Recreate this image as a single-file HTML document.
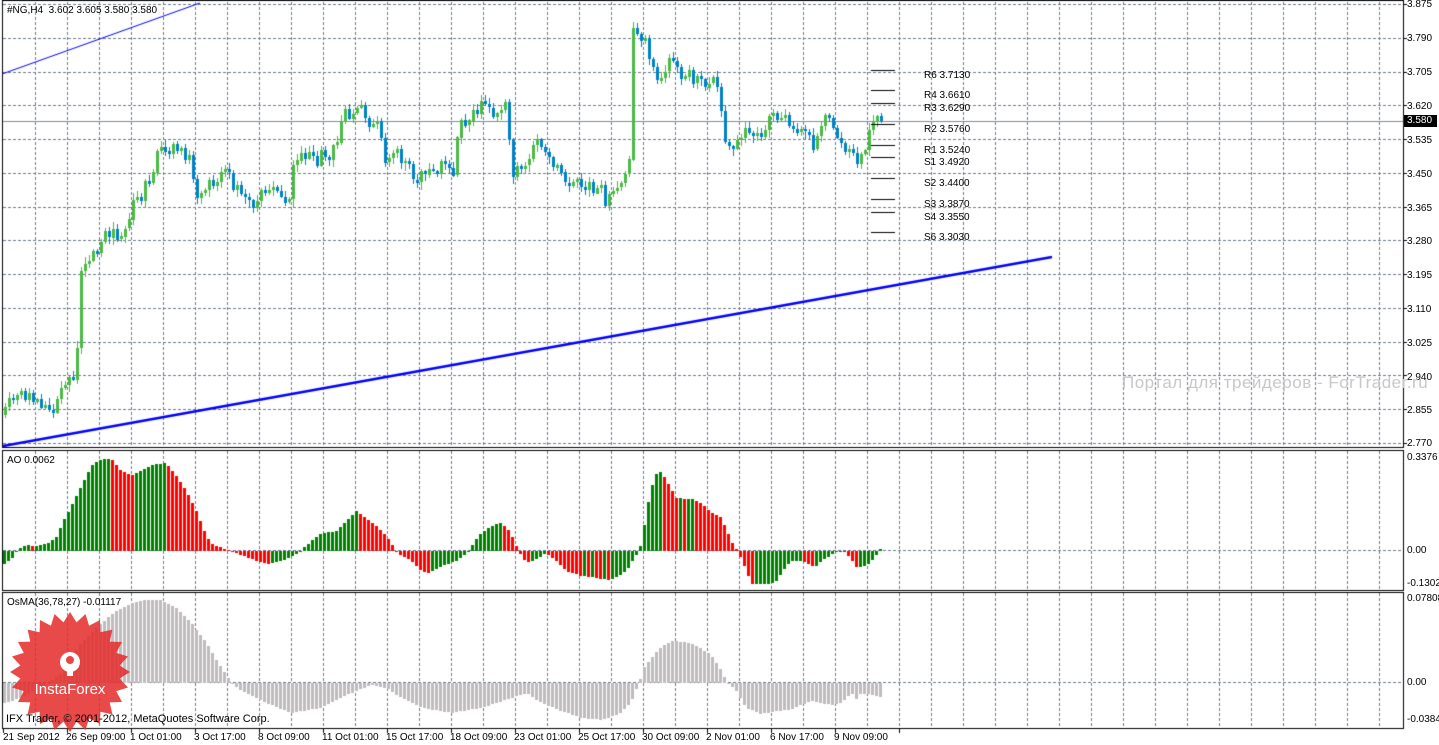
<!DOCTYPE html>
<html><head><meta charset="utf-8">
<style>
html,body{margin:0;padding:0;background:#fff;}
body{width:1439px;height:745px;position:relative;overflow:hidden;font-family:"Liberation Sans",sans-serif;font-size:10px;color:#000;}
canvas{position:absolute;left:0;top:0;}
.t{position:absolute;white-space:nowrap;font-size:10px;line-height:11px;}
.ax{left:1407px;}
</style></head><body>
<canvas id="c" width="1439" height="745"></canvas>
<div class="t" style="left:7px;top:5px">#NG,H4&nbsp; 3.602 3.605 3.580 3.580</div>
<div class="t ax" style="top:-1px">3.875</div>
<div class="t ax" style="top:33px">3.790</div>
<div class="t ax" style="top:67px">3.705</div>
<div class="t ax" style="top:101px">3.620</div>
<div class="t" style="left:1404px;top:115px;background:#000;color:#fff;padding:0 5px 0 3px;height:12px;line-height:12px">3.580</div>
<div class="t ax" style="top:135px">3.535</div>
<div class="t ax" style="top:169px">3.450</div>
<div class="t ax" style="top:203px">3.365</div>
<div class="t ax" style="top:236px">3.280</div>
<div class="t ax" style="top:270px">3.195</div>
<div class="t ax" style="top:304px">3.110</div>
<div class="t ax" style="top:338px">3.025</div>
<div class="t ax" style="top:372px">2.940</div>
<div class="t ax" style="top:405px">2.855</div>
<div class="t ax" style="top:438px">2.770</div>
<div class="t" style="left:924px;top:70px">R6 3.7130</div>
<div class="t" style="left:924px;top:90px">R4 3.6610</div>
<div class="t" style="left:924px;top:103px">R3 3.6290</div>
<div class="t" style="left:924px;top:124px">R2 3.5760</div>
<div class="t" style="left:924px;top:145px">R1 3.5240</div>
<div class="t" style="left:924px;top:157px">S1 3.4920</div>
<div class="t" style="left:924px;top:178px">S2 3.4400</div>
<div class="t" style="left:924px;top:199px">S3 3.3870</div>
<div class="t" style="left:924px;top:212px">S4 3.3550</div>
<div class="t" style="left:924px;top:232px">S6 3.3030</div>
<div class="t" style="left:1122px;top:374px;font-size:17px;line-height:18px;color:#c8c8c8;letter-spacing:0.5px">Портал для трейдеров - ForTrader.ru</div>
<div class="t" style="left:7px;top:455px">AO 0.0062</div>
<div class="t ax" style="top:452px">0.3376</div>
<div class="t ax" style="top:545px">0.00</div>
<div class="t ax" style="top:578px">-0.1302</div>
<div class="t" style="left:7px;top:597px">OsMA(36,78,27) -0.01117</div>
<div class="t ax" style="top:593px">0.07808</div>
<div class="t ax" style="top:677px">0.00</div>
<div class="t ax" style="top:714px">-0.03848</div>
<svg style="position:absolute;left:0;top:0" width="1439" height="745">
<polygon id="star" fill="#e42a2a" fill-opacity="0.85"/>
<g fill="#fff"><circle cx="70" cy="662" r="10"/><rect x="67" y="662" width="6" height="14"/></g>
<circle cx="70" cy="660" r="4" fill="#e44"/>
<text x="70" y="694" fill="#fff" font-family="Liberation Sans,sans-serif" font-size="15" text-anchor="middle">InstaForex</text>
</svg>
<div class="t" style="left:6px;top:714px;font-size:11px">IFX Trader, © 2001-2012, MetaQuotes Software Corp.</div>
<div class="t" style="left:3px;top:732px">21 Sep 2012</div>
<div class="t" style="left:66px;top:732px">26 Sep 09:00</div>
<div class="t" style="left:130px;top:732px">1 Oct 01:00</div>
<div class="t" style="left:194px;top:732px">3 Oct 17:00</div>
<div class="t" style="left:258px;top:732px">8 Oct 09:00</div>
<div class="t" style="left:322px;top:732px">11 Oct 01:00</div>
<div class="t" style="left:386px;top:732px">15 Oct 17:00</div>
<div class="t" style="left:450px;top:732px">18 Oct 09:00</div>
<div class="t" style="left:514px;top:732px">23 Oct 01:00</div>
<div class="t" style="left:578px;top:732px">25 Oct 17:00</div>
<div class="t" style="left:642px;top:732px">30 Oct 09:00</div>
<div class="t" style="left:706px;top:732px">2 Nov 01:00</div>
<div class="t" style="left:770px;top:732px">6 Nov 17:00</div>
<div class="t" style="left:834px;top:732px">9 Nov 09:00</div>
<script>
(function(){
var c=document.getElementById('c').getContext('2d');
function interp(k,x){for(var i=0;i<k.length-1;i++){if(x<=k[i+1][0]){var a=k[i],b=k[i+1];return a[1]+(b[1]-a[1])*(x-a[0])/(b[0]-a[0]);}}return k[k.length-1][1];}
var s=11;function rnd(){s=(s*16807)%2147483647;return s/2147483647;}
c.strokeStyle='#6d7b8d';c.lineWidth=1;c.setLineDash([3,2]);
function hl(y,x1,x2){c.beginPath();c.moveTo(x1,y+0.5);c.lineTo(x2,y+0.5);c.stroke();}
function vl(x,y1,y2){c.beginPath();c.moveTo(x+0.5,y1);c.lineTo(x+0.5,y2);c.stroke();}
for(var i=0;i<14;i++)hl(Math.round(4+i*33.77),3,1403);
hl(550,3,1403);hl(682,3,1403);
for(var x=35;x<1403;x+=32){vl(x,2,447);vl(x,451,590);vl(x,593,728);}
c.setLineDash([]);
c.strokeStyle='#000';c.lineWidth=1;
c.strokeRect(2.5,0.5,1401,447);c.strokeRect(2.5,450.5,1401,140);c.strokeRect(2.5,592.5,1401,136);
c.fillStyle='#000';
for(var i=0;i<14;i++)c.fillRect(1404,Math.round(4+i*33.77),3,1);
for(var x=3;x<900;x+=64)c.fillRect(x,729,1,4);
c.fillStyle='#7c8ca0';c.fillRect(3,121,1400,1);
var K=[[4,415],[10,400],[18,398],[25,395],[30,400],[45,410],[52,405],[58,385],[68,375],[73,372],[76,345],[78,300],[80,268],[88,262],[95,250],[102,238],[112,235],[120,235],[126,225],[132,205],[140,195],[148,175],[160,150],[170,148],[180,150],[188,160],[195,205],[205,185],[215,182],[225,178],[240,190],[250,205],[262,190],[275,185],[288,205],[292,165],[300,155],[315,160],[330,155],[338,140],[342,108],[350,112],[365,118],[378,125],[385,160],[395,155],[408,168],[415,180],[430,175],[440,160],[452,168],[458,130],[468,118],[480,105],[492,110],[505,105],[512,170],[520,175],[530,150],[540,145],[552,160],[560,175],[575,180],[590,185],[605,200],[615,195],[625,172],[630,150],[632,33],[645,38],[650,75],[660,72],[670,62],[680,75],[692,78],[712,82],[718,92],[722,135],[735,145],[745,128],[760,138],[770,112],[785,120],[800,128],[812,142],[822,118],[832,125],[842,150],[855,158],[862,160],[868,128],[875,118],[880,121]];
var prev=interp(K,4);
for(var x=4;x<=880;x+=4){
 var base=interp(K,x);
 var o=prev,cl=base+(rnd()-0.5)*16;if(x==880)cl=121;
 if(Math.abs(o-cl)<2){cl=o+(rnd()<0.5?3:-3);}
 var hi=Math.min(o,cl)-1-rnd()*6,lo=Math.max(o,cl)+1+rnd()*6;
 var up=cl<o;c.fillStyle=up?'#4cb944':'#0080c8';
 c.fillRect(x+1,Math.round(hi),1,Math.round(lo-hi));
 var ty=Math.round(Math.min(o,cl)),bh=Math.max(2,Math.round(Math.abs(o-cl)));
 c.fillRect(x,ty,3,bh);
 prev=cl;
}
c.fillStyle='#000';[70,90,103,124,145,157,178,199,212,232].forEach(function(y){c.fillRect(871,y,24,1);});
c.strokeStyle='#0000ff';c.lineWidth=1;c.beginPath();c.moveTo(2,74);c.lineTo(200,3);c.stroke();
c.lineWidth=2.4;c.beginPath();c.moveTo(3,446);c.lineTo(1052,257);c.stroke();
var A=[[3,-13],[10,-8],[18,3],[25,6],[35,5],[40,6],[48,8],[55,14],[62,30],[70,45],[80,65],[90,85],[100,92],[110,92],[120,80],[130,75],[140,80],[150,86],[165,88],[175,75],[185,60],[195,40],[205,15],[212,6],[230,0],[250,-8],[265,-13],[280,-10],[295,-3],[310,10],[320,18],[335,20],[345,30],[355,40],[365,33],[375,25],[385,15],[395,0],[400,-5],[410,-10],[420,-20],[428,-22],[440,-15],[455,-10],[465,-3],[470,5],[480,18],[490,25],[500,28],[508,20],[515,5],[520,-5],[525,-12],[535,-8],[545,-2],[555,-10],[565,-20],[580,-25],[610,-29],[625,-20],[632,-8],[638,0],[642,20],[646,44],[650,63],[655,77],[660,79],[665,70],[670,62],[675,53],[690,52],[700,48],[710,38],[720,33],[725,22],[730,10],[735,2],[740,-8],[745,-20],[750,-33],[770,-33],[775,-30],[780,-23],[785,-15],[790,-10],[800,-10],[810,-15],[815,-15],[820,-10],[830,-4],[835,0],[842,0],[846,-4],[850,-8],[855,-16],[862,-16],[866,-14],[870,-10],[875,-4],[879,2]];
var pv=null;
for(var x=3;x<=879;x+=4){var v=Math.round(interp(A,x));c.fillStyle=(pv===null||v>=pv)?'#008000':'#ff0000';pv=v;
 if(v>0)c.fillRect(x,551-v,3,v);else c.fillRect(x,551,3,Math.max(1,-v));}
var O=[[3,-20],[20,-15],[40,-5],[60,10],[80,40],[100,60],[115,72],[130,80],[145,83],[160,83],[175,75],[190,60],[205,40],[220,15],[230,0],[240,-8],[260,-18],[290,-30],[320,-25],[345,-12],[370,-2],[385,-5],[400,-15],[420,-25],[450,-30],[480,-25],[510,-15],[525,-10],[540,-20],[560,-28],[580,-35],[600,-37],[620,-30],[630,-18],[635,-6],[640,6],[643,16],[650,25],[660,36],[670,42],[690,40],[700,34],[710,28],[720,12],[725,2],[735,-8],[745,-25],[760,-31],[775,-28],[790,-27],[800,-22],[810,-18],[820,-20],[830,-22],[840,-20],[850,-10],[855,-16],[860,-10],[879,-14]];
c.fillStyle='#c0bcbe';
for(var x=3;x<=879;x+=4){var v=Math.round(interp(O,x));if(v>0)c.fillRect(x,683-v,3,v);else c.fillRect(x,683,3,Math.max(1,-v));}
var p=[],n=24,cx=70,cy=672;for(var i=0;i<n*2;i++){var r=i%2?50:60,a=Math.PI*i/n;p.push((cx+r*Math.cos(a)).toFixed(1)+','+(cy+r*Math.sin(a)).toFixed(1));}
document.getElementById('star').setAttribute('points',p.join(' '));
})();
</script>
</body></html>
